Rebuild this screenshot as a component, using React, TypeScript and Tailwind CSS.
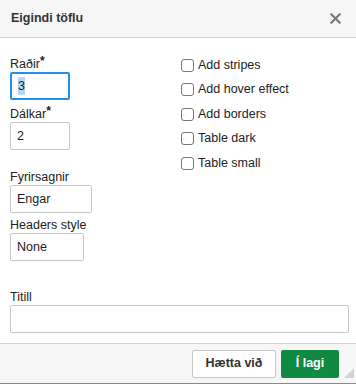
import React from 'react';
import { X } from 'lucide-react';

const font = { fontFamily: '"Liberation Sans", Arial, sans-serif' };

const Label: React.FC<{ text: string; required?: boolean }> = ({ text, required }) => (
  <div className="h-4 leading-4 text-[12.5px] text-[#222]">
    {text}
    {required && <span className="font-bold text-[12px] relative -top-[3px]">*</span>}
  </div>
);

const Box: React.FC<{ width: string; children?: React.ReactNode; focused?: boolean }> = ({ width, children, focused }) => (
  <div
    className={`${width} h-[28px] flex items-center pl-[6px] text-[12.5px] text-[#222] rounded-[2px] bg-white ${
      focused ? 'border-2 border-[#1e90f5] pl-[5px]' : 'border border-[#c8c8c8]'
    }`}
  >
    {children}
  </div>
);

const options = ['Add stripes', 'Add hover effect', 'Add borders', 'Table dark', 'Table small'];

export default function App() {
  return (
    <div className="w-[356px] h-[384px] bg-white flex flex-col overflow-hidden" style={font}>
      {/* Header */}
      <div className="h-[38px] shrink-0 flex items-center justify-between pl-[11px] pr-[12px] bg-[#f6f6f6] border-b border-[#d2d2d2]">
        <span className="text-[12.5px] font-bold text-[#333]">Eigindi töflu</span>
        <X size={17} strokeWidth={3} className="text-[#777]" />
      </div>

      {/* Body */}
      <div className="flex-1 pl-[10px] pr-[7px] pt-[18px]">
        <div className="flex">
          <div className="w-[170px] flex flex-col">
            <Label text="Raðir" required />
            <Box width="w-[60px]" focused>
              <span className="bg-[#b3d7fe]">3</span>
            </Box>
            <div className="mt-[6px]">
              <Label text="Dálkar" required />
            </div>
            <Box width="w-[60px]">2</Box>
            <div className="mt-[19px]">
              <Label text="Fyrirsagnir" />
            </div>
            <Box width="w-[82px]">Engar</Box>
            <div className="mt-[4px]">
              <Label text="Headers style" />
            </div>
            <Box width="w-[74px]">None</Box>
          </div>

          <div className="flex flex-col gap-[8.5px] pt-[1px]">
            {options.map((o) => (
              <label key={o} className="flex items-center h-4 text-[12.5px] text-[#222]">
                <span className="w-[13px] h-[13px] ml-[1px] rounded-[3px] border border-[#767676] bg-white mr-[4px]" />
                {o}
              </label>
            ))}
          </div>
        </div>

        <div className="mt-[28px]">
          <Label text="Titill" />
        </div>
        <div className="h-[28px] w-full border border-[#c8c8c8] rounded-[2px]" />
      </div>

      {/* Footer */}
      <div className="h-[41px] shrink-0 relative flex items-center justify-end gap-[5px] pr-[17px] bg-[#f6f6f6] border-t border-[#d2d2d2] border-b border-b-[#8a8a8a]">
        <button className="w-[84px] h-[28px] rounded-[2px] border border-[#c8c8c8] bg-white text-[12.5px] font-bold text-[#333]">
          Hætta við
        </button>
        <button className="w-[58px] h-[28px] rounded-[2px] bg-[#118a41] text-[12.5px] font-bold text-white">
          Í lagi
        </button>
        <svg className="absolute right-[2px] bottom-[5px]" width="10" height="10" viewBox="0 0 10 10">
          <path d="M10 0 L10 10 L0 10 Z" fill="#d4d4d4" />
        </svg>
      </div>
    </div>
  );
}
